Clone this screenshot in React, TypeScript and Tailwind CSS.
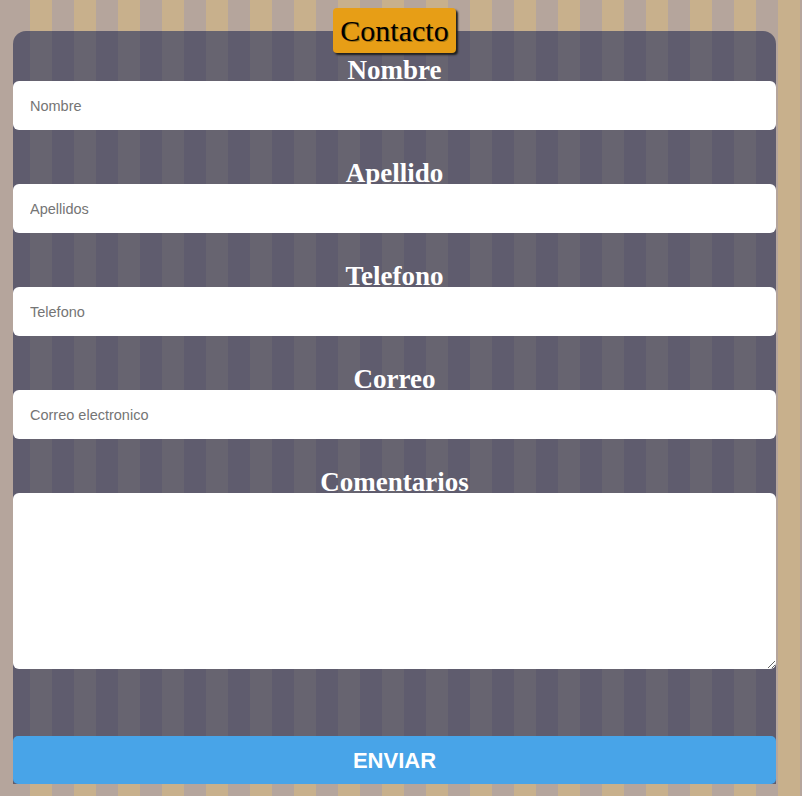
const fields = [
  { label: "Nombre", placeholder: "Nombre" },
  { label: "Apellido", placeholder: "Apellidos" },
  { label: "Telefono", placeholder: "Telefono" },
  { label: "Correo", placeholder: "Correo electronico" },
];

// Labels sit right on top of the inputs; the input paints over the descenders.
function FieldLabel({ text, first = false }: Readonly<{ text: string; first?: boolean }>) {
  return (
    <label
      className={`block h-[26px] text-center font-['Liberation_Serif',serif] text-[27px] font-bold leading-[30px] text-white ${
        first ? "" : "mt-[28px]"
      }`}
    >
      {text}
    </label>
  );
}

export default function App() {
  return (
    <div className="min-h-screen bg-[#c8b08c] [background-image:repeating-linear-gradient(90deg,#b5a59c_0px,#b5a59c_22px,#c8b08c_22px,#c8b08c_44px)] [background-position:8px_0px] pt-[8px] pb-[12px]">
      <div className="ml-[13px] w-[763px]">
        <div className="relative z-10 mx-auto flex h-[45px] w-fit items-center rounded-[4px] bg-[#e79e16] px-[7px] font-['Liberation_Serif',serif] text-[30px] text-black shadow-[2px_2px_2px_#1f1f1f] [text-shadow:1px_1px_0_rgba(40,30,10,0.35)]">
          Contacto
        </div>

        {/* card stripes line up with the page stripes: card sits 13px in */}
        <form className="-mt-[22px] rounded-t-[13px] bg-[#5f5c6e] [background-image:repeating-linear-gradient(90deg,#5f5c6e_0px,#5f5c6e_22px,#676470_22px,#676470_44px)] [background-position:-5px_0px] pt-[24px]">
          {fields.map((f, i) => (
            <div key={f.label}>
              <FieldLabel text={f.label} first={i === 0} />
              <input
                type="text"
                placeholder={f.placeholder}
                className="relative block h-[49px] w-full rounded-[6px] bg-white px-[17px] font-['Liberation_Sans',Arial,sans-serif] text-[14.5px] text-black outline-none placeholder:text-[#757575]"
              />
            </div>
          ))}

          <FieldLabel text="Comentarios" />
          <textarea className="relative block h-[176px] w-full rounded-[6px] bg-white px-[17px] py-[10px] font-['Liberation_Sans',Arial,sans-serif] text-[14.5px] text-black outline-none" />

          <button
            type="button"
            className="mt-[67px] block h-[48px] w-full rounded-[5px] bg-[#48a4e8] font-['Liberation_Sans',Arial,sans-serif] text-[22px] font-bold text-white"
          >
            ENVIAR
          </button>
        </form>
      </div>
    </div>
  );
}
